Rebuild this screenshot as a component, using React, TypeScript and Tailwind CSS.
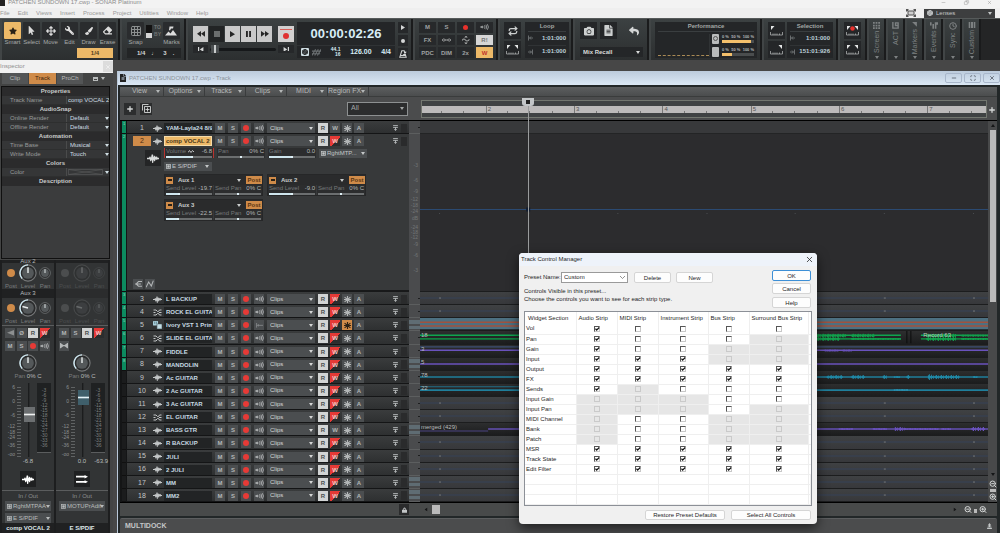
import React from "react";
import clsx from "clsx";
import { Repeat, Grid3x3, ZoomIn, ZoomOut, Aperture, Clock, Minus, Copy, X, Plus, Scan } from "lucide-react";
import {
  FaArrowsAlt,
  FaCamera,
  FaEraser,
  FaFileAlt,
  FaMousePointer,
  FaPaintBrush,
  FaReply,
  FaStar,
  FaWrench,
} from "react-icons/fa";

type Kind = "audio" | "split" | "synth";
type Lane = "empty" | "synth" | "green" | "purpleTop" | "purple" | "teal" | "tealTop" | "merged";

interface Track {
  id: number;
  name: string;
  kind?: Kind;
  write?: boolean;
  frozen?: boolean;
  lane?: Lane;
  label?: string;
}

const TRACKS: Track[] = [
  { id: 3, name: "L BACKUP" },
  { id: 4, name: "ROCK EL GUITAR", kind: "split" },
  { id: 5, name: "Ivory VST 1 Primary", kind: "synth", frozen: true, lane: "synth" },
  { id: 6, name: "SLIDE EL GUITAR", kind: "split", lane: "green", label: "18" },
  { id: 7, name: "FIDDLE", lane: "purpleTop", label: "3" },
  { id: 8, name: "MANDOLIN", lane: "purple", label: "5" },
  { id: 9, name: "Ac GUITAR", lane: "teal", label: "78" },
  { id: 10, name: "2 Ac GUITAR", lane: "tealTop", label: "22" },
  { id: 11, name: "3 Ac GUITAR" },
  { id: 12, name: "EL GUITAR", kind: "split" },
  { id: 13, name: "BASS GTR", write: false, lane: "merged", label: "merged (429)" },
  { id: 14, name: "R BACKUP" },
  { id: 15, name: "JULI" },
  { id: 16, name: "2 JULI" },
  { id: 17, name: "MM" },
  { id: 18, name: "MM2" },
];

const STRIPS = ["Audio Strip", "MIDI Strip", "Instrument Strip", "Bus Strip", "Surround Bus Strip"];

// x = checked, o = unchecked, - = not available for that strip
const WIDGETS: [string, string][] = [
  ["Vol", "xoooo"],
  ["Pan", "xooo-"],
  ["Gain", "xoo--"],
  ["Input", "xxx--"],
  ["Output", "xxxxx"],
  ["FX", "xxxxx"],
  ["Sends", "x-ooo"],
  ["Input Gain", "---oo"],
  ["Input Pan", "---o-"],
  ["MIDI Channel", "-oo--"],
  ["Bank", "-oo--"],
  ["Patch", "-oo--"],
  ["MSR", "xxxxx"],
  ["Track State", "xxxxx"],
  ["Edit Filter", "xxxxx"],
];

const Caret = ({ className = "" }: { className?: string }) => (
  <svg viewBox="0 0 8 6" className={clsx("h-[3px] w-[4px] shrink-0 fill-current", className)}>
    <path d="M0 0h8L4 6z" />
  </svg>
);

const Wave = ({ className = "" }: { className?: string }) => (
  <svg viewBox="0 0 18 12" className={clsx("fill-current", className)}>
    <path d="M0 5h3l1-2h1l1 2 1-5h2l1 4 1-2h1l1 2 1-1h1l1 2h2v2h-2l-1 1h-1l-1-1-1 3h-1l-1-2-1 6H8L7 8l-1 2H5L4 7H0z" />
  </svg>
);

const SplitIcon = () => (
  <svg viewBox="0 0 18 14" className="h-[7px] w-[9px] fill-none stroke-current" strokeWidth="2">
    <path d="M1 2h5l3 3h2l2-3h4M1 7h4M12 7h5M1 12h5l3-3h2l2 3h4" />
  </svg>
);

const SynthIcon = () => (
  <svg viewBox="0 0 16 14" className="h-[8px] w-[9px]">
    <rect width="9" height="8" rx="1" fill="#a9cfdb" />
    <path d="M3 1v4M6 1v4" stroke="#35525c" />
    <rect x="7" y="5" width="9" height="9" rx="1" fill="#c3dde5" stroke="#3a4c52" />
  </svg>
);

const Echo = () => (
  <svg viewBox="0 0 16 10" className="h-[6px] w-[9px] fill-none stroke-current" strokeWidth="1.5">
    <circle cx="4" cy="5" r="1.500" className="fill-current" />
    <path d="M0 5h4M8 2q2 3 0 6M10.500 1q3 4 0 8M13 0q4 5 0 10" />
  </svg>
);

const Snow = () => (
  <svg viewBox="0 0 12 12" className="h-[7px] w-[7px] stroke-current" strokeWidth="2">
    <path d="M6 0v12M1 2l10 8M11 2L1 10M0 6h12" />
  </svg>
);

const Port = () => (
  <svg viewBox="0 0 10 10" className="ml-[2px] h-[5px] w-[5px] shrink-0 fill-none stroke-current" strokeWidth="1.500">
    <rect x="1" y="1" width="8" height="8" />
    <rect x="3.500" y="3.500" width="3" height="3" className="fill-current" />
  </svg>
);

const Ruler = ({ dot = false, left = false, right = false }) => (
  <svg viewBox="0 0 26 20" className="h-[10px] w-[13px] fill-none stroke-[#a9acac]" strokeWidth="1.600">
    <path d="M1 12v6h24v-6M6 15v3M10 15v3M14 15v3M19 15v3" />
    {left && <path d="M2 0h7L2 8z" className="fill-[#e4e6e6]" stroke="none" />}
    {right && <path d="M24 0h-7l7 8z" className="fill-[#e4e6e6]" stroke="none" />}
    {dot && <circle cx="13" cy="5" r="4.500" fill="#e8312c" stroke="none" />}
  </svg>
);

const Drop = ({
  label,
  value,
  className = "",
  caret = "right-[3px]",
  port,
}: {
  label: string;
  value: string;
  className?: string;
  caret?: string;
  port?: boolean;
}) => (
  <span className={clsx("relative flex items-center", className)}>
    {port && <Port />}
    <select
      aria-label={label}
      className={clsx("h-full min-w-0 flex-1 appearance-none bg-transparent outline-none", port ? "pl-px" : "pl-[3px]")}
    >
      <option>{value}</option>
    </select>
    <Caret className={clsx("pointer-events-none absolute", caret)} />
  </span>
);

/* ---------- top toolbar ---------- */

const Module = ({ className, children }: { className: string; children: React.ReactNode }) => (
  <section
    className={clsx(
      "flex shrink-0 border-l-2 border-[#414546] bg-linear-to-b from-[#3c4142] to-[#2c2f30] pt-[3px]",
      className
    )}
  >
    {children}
  </section>
);

const Tool = ({ label, active, children }: { label: string; active?: boolean; children: React.ReactNode }) => (
  <div className="flex w-[17px] flex-col items-center">
    <button
      aria-label={label}
      className={clsx(
        "flex h-[17px] w-[17px] items-center justify-center rounded-[1px]",
        active ? "bg-[#edb968] text-[#2a2116]" : "bg-[#2a2c2e] text-[#dcdcdc]"
      )}
    >
      {children}
    </button>
    <span className="text-[6px] leading-[7px] whitespace-nowrap text-[#a7a9a9]">{label}</span>
  </div>
);

const ToolsModule = () => (
  <Module className="w-[118px] flex-col pl-[2px]">
    <div className="flex gap-[2px]">
      <Tool label="Smart" active>
        <FaStar className="h-[8px] w-[8px]" />
      </Tool>
      <Tool label="Select">
        <FaMousePointer className="h-[9px] w-[7px]" />
      </Tool>
      <Tool label="Move">
        <FaArrowsAlt className="h-[10px] w-[10px]" />
      </Tool>
      <Tool label="Edit">
        <FaWrench className="h-[9px] w-[9px] -scale-x-100" />
      </Tool>
      <Tool label="Draw">
        <FaPaintBrush className="h-[8px] w-[8px]" />
      </Tool>
      <Tool label="Erase">
        <FaEraser className="h-[9px] w-[9px]" />
      </Tool>
    </div>
    <button className="mt-[2px] mr-[5px] h-[10px] w-[36px] self-end bg-[#edb968] text-[6px] font-bold text-[#54401f]">
      1/4
    </button>
  </Module>
);

const SnapModule = () => (
  <Module className="w-[64px] flex-col pl-[5px]">
    <div className="flex justify-between pr-[4px]">
      <Tool label="Snap">
        <Grid3x3 className="h-[12px] w-[12px] text-[#8d9090]" strokeWidth={2} />
      </Tool>
      <div className="flex items-center gap-[2px] pb-[6px]">
        <span className="flex h-[13px] w-[6px] flex-col justify-end bg-[#121212]">
          <span className="h-[5px] bg-[#d4d4d4]" />
        </span>
        <span className="flex flex-col text-[5px] leading-[7px] font-bold text-[#707373]">
          <span>TO</span>
          <span>BY</span>
        </span>
      </div>
      <Tool label="Marks">
        <svg viewBox="0 0 24 20" className="h-[10px] w-[12px] fill-current">
          <path d="M0 19l7-8 4 4 5-7 8 11zM9 1h8l-1 4h-4l-2 4-2-1z" />
        </svg>
      </Tool>
    </div>
    <div className="mt-[2px] flex h-[10px] w-[54px] items-center gap-[6px] bg-[#232526] pl-[10px] text-[6px] font-bold text-[#d5d7d7]">
      <span>1/4</span>
      <span>♩</span>
      <span>3</span>
      <span>.</span>
    </div>
  </Module>
);

const LIGHT_KEY = "flex h-[16px] w-[15px] items-center justify-center bg-[#c9c9c9] text-[#262626]";

const TransportModule = () => (
  <Module className="w-[225px] gap-[3px] pl-[5px]">
    <div className="flex w-[101px] flex-col gap-[3px] pt-[4px]">
      <div className="flex gap-px">
        <button aria-label="Rewind" className={LIGHT_KEY}>
          <svg viewBox="0 0 14 10" className="w-[8px] fill-current">
            <path d="M7 0v10L0 5zM14 0v10L7 5z" />
          </svg>
        </button>
        <button aria-label="Stop" className="flex h-[16px] w-[15px] items-center justify-center bg-[#222425]">
          <span className="h-[6px] w-[6px] bg-[#6a6d6d]" />
        </button>
        <button aria-label="Play" className={LIGHT_KEY}>
          <svg viewBox="0 0 8 10" className="w-[5px] fill-current">
            <path d="M0 0l8 5-8 5z" />
          </svg>
        </button>
        <button aria-label="Pause" className={LIGHT_KEY}>
          <svg viewBox="0 0 8 10" className="w-[5px] fill-current">
            <path d="M0 0h3v10H0zM5 0h3v10H5z" />
          </svg>
        </button>
        <button aria-label="Fast forward" className={LIGHT_KEY}>
          <svg viewBox="0 0 14 10" className="w-[8px] fill-current">
            <path d="M0 0v10l7-5zM7 0v10l7-5z" />
          </svg>
        </button>
        <button
          aria-label="Record"
          className="ml-[5px] flex h-[16px] w-[16px] flex-col items-center justify-center gap-[3px] bg-[#d2d0d0]"
        >
          <span className="h-px w-[12px] bg-[#d9605a]" />
          <span className="h-[6px] w-[6px] rounded-full bg-[#e03131]" />
        </button>
      </div>
      <div className="flex h-[8px] items-center text-[#d4d6d6]">
        <button aria-label="Go to start" className="flex h-full w-[15px] items-center justify-center bg-[#26282a]">
          <svg viewBox="0 0 10 8" className="w-[6px] fill-current">
            <path d="M0 0h2v8H0zM9 0v8L3 4z" />
          </svg>
        </button>
        <input
          type="range"
          aria-label="Song position"
          defaultValue={2}
          className="mx-[2px] h-[3px] min-w-0 flex-1 appearance-none rounded bg-[#16181a] [&::-webkit-slider-thumb]:h-[8px] [&::-webkit-slider-thumb]:w-[8px] [&::-webkit-slider-thumb]:appearance-none [&::-webkit-slider-thumb]:border-x-[3px] [&::-webkit-slider-thumb]:border-[#4a4e50] [&::-webkit-slider-thumb]:bg-[#c9cccc]"
        />
        <button aria-label="Go to end" className="flex h-full w-[16px] items-center justify-center bg-[#26282a]">
          <svg viewBox="0 0 10 8" className="w-[6px] fill-current">
            <path d="M8 0h2v8H8zM1 0v8l6-4z" />
          </svg>
        </button>
      </div>
    </div>
    <div className="flex h-[36px] w-[98px] flex-col bg-[#242628] text-[#d8edf6]">
      <span className="flex-1 pt-[5px] text-center text-[13px] leading-[14px] font-bold">00:00:02:26</span>
      <div className="flex h-[13px] items-center justify-between border-t border-[#303335] px-[4px] text-[7px] font-bold">
        <span className="flex gap-[3px]">
          <span className="flex h-[8px] w-[8px] items-center justify-center rounded-[1px] bg-[#cfdde2] text-[#242628]">
            <Aperture className="h-[6px] w-[6px]" strokeWidth={4} />
          </span>
          <svg viewBox="0 0 10 8" className="h-[8px] w-[9px] stroke-[#6a6f71]" strokeWidth="1.200">
            <path d="M0 8l4-7M3 8l4-7M6 8l4-7M0 3h10M0 6h9" />
          </svg>
        </span>
        <span className="flex flex-col items-end text-[5px] leading-[5px]">
          <span>44.1</span>
          <span>16</span>
        </span>
        <span>126.00</span>
        <span>4/4</span>
      </div>
    </div>
    <div className="flex flex-col gap-[2px] text-[#d4d6d6]">
      <button aria-label="Preview" className="flex h-[11px] w-[10px] items-center justify-center bg-[#26282a]">
        <svg viewBox="0 0 8 10" className="w-[4px] fill-current">
          <path d="M0 0l8 5-8 5z" />
        </svg>
      </button>
      <button aria-label="Arm" className="flex h-[11px] w-[10px] items-center justify-center bg-[#26282a]">
        <span className="h-[4px] w-[4px] rounded-full bg-[#d4d6d6]" />
      </button>
      <button aria-label="Metronome" className="flex h-[11px] w-[10px] items-center justify-center bg-[#26282a]">
        <svg viewBox="0 0 10 10" className="w-[8px] fill-none stroke-current" strokeWidth="1.300">
          <path d="M3.500 1h3L9 9H1zM5 7l4-5M2 7h6" />
        </svg>
      </button>
    </div>
  </Module>
);

const MIX_KEYS = ["M", "S", "rec", "echo", "FX", "dim", "auto", "R!", "PDC", "DIM", "2x", "W"];

const MixModule = () => (
  <Module className="w-[83px] pl-[4px]">
    <div className="grid h-[36px] grid-cols-4 grid-rows-3 gap-[2px]">
      {MIX_KEYS.map((key) => (
        <button
          key={key}
          aria-label={key}
          className={clsx(
            "flex w-[17px] items-center justify-center text-[6px] leading-none font-bold",
            key === "R!" && "bg-[#d6d6d6] text-[#737575]",
            key === "W" && "bg-[#edb968] text-[#c0302a]",
            key !== "R!" && key !== "W" && "bg-[#27292b] text-[#9fa2a2]"
          )}
        >
          {key === "rec" && <span className="h-[5px] w-[5px] rounded-full bg-[#e8312c]" />}
          {key === "echo" && <Echo />}
          {key === "dim" && (
            <svg viewBox="0 0 18 8" className="w-[9px] fill-none stroke-current" strokeWidth="1.800">
              <path d="M0 4q4-5 7 0-3 5-7 0M11 4q3-5 7 0-4 5-7 0M6 4h6" />
            </svg>
          )}
          {key === "auto" && (
            <svg viewBox="0 0 14 14" className="w-[8px] fill-none stroke-current" strokeWidth="1.800">
              <path d="M0 8q3-5 6-1t7-1M5 3l2-3 2 3M5 11l2 3 2-3" />
            </svg>
          )}
          {!["rec", "echo", "auto", "dim"].includes(key) && key}
        </button>
      ))}
    </div>
  </Module>
);

const IconKey = ({ label, children }: { label: string; children: React.ReactNode }) => (
  <button aria-label={label} className="flex h-[17px] w-[17px] items-center justify-center bg-[#242628] text-[#cdd0d0]">
    {children}
  </button>
);

const RangePanel = ({ title, from, to, className }: { title: string; from: string; to: string; className: string }) => (
  <div className={clsx("flex h-[36px] flex-col bg-[#242628] px-[3px] text-[6px]", className)}>
    <span className="border-b border-[#3a3e40] text-center leading-[9px] font-bold text-[#a3a6a6]">{title}</span>
    {[from, to].map((time, i) => (
      <span
        key={i}
        className="flex flex-1 items-center justify-between border-b border-[#303335] font-bold text-[#bdd0d8] last:border-0"
      >
        <svg
          viewBox="0 0 10 10"
          className={clsx("h-[6px] w-[5px] fill-none stroke-[#7c8082]", i === 1 && "-scale-x-100")}
          strokeWidth="1.600"
        >
          <path d="M1 0v10M3 5h7M6 2l-3 3 3 3" />
        </svg>
        {time}
      </span>
    ))}
  </div>
);

const Load = ({ label, value }: { label: string; value: number }) => (
  <div className="flex items-center gap-[3px]">
    <span className="flex h-[10px] w-[7px] items-center justify-center rounded-[1px] bg-[#b9bbbb]">
      {label === "Disk" && <span className="h-[5px] w-[5px] rounded-full border border-[#555]" />}
    </span>
    <div className="flex flex-1 flex-col gap-px">
      <span className="flex justify-between text-[4px] leading-[5px] font-bold text-[#b5b8b8]">
        <span>0 %</span>
        <span>50 %</span>
        <span>100 %</span>
      </span>
      <span className="h-[3px] bg-[#4a4d4e]" role="meter" aria-label={label} aria-valuenow={value}>
        <span className="block h-full bg-[#f3c06c]" style={{ width: `${value}%` }} />
      </span>
    </div>
  </div>
);

const PerformanceModule = () => (
  <Module className="w-[111px] pl-[4px]">
    <div className="flex h-[36px] w-[102px] flex-col bg-[#242628] px-[3px]">
      <span className="border-b border-[#3a3e40] text-center text-[6px] leading-[9px] font-bold text-[#a3a6a6]">
        Performance
      </span>
      <div className="flex flex-1 items-center">
        <div className="mb-[2px] w-[51px] self-end border-b border-dashed border-[#a98a55]" />
        <div className="flex flex-1 flex-col gap-[3px] border-l border-[#303335] pl-[2px]">
          <Load label="Disk" value={91} />
          <Load label="CPU" value={30} />
        </div>
      </div>
    </div>
  </Module>
);

const SIDE_TABS: [string, React.ReactNode][] = [
  [
    "Screen",
    <svg viewBox="0 0 8 8" className="h-[7px] w-[7px] fill-current">
      <path d="M0 0h2v2H0zM3 0h2v2H3zM6 0h2v2H6zM0 3h2v2H0zM3 3h2v2H3zM6 3h2v2H6zM0 6h2v2H0zM3 6h2v2H3zM6 6h2v2H6z" />
    </svg>,
  ],
  [
    "ACT",
    <svg viewBox="0 0 8 8" className="h-[7px] w-[7px] fill-none stroke-current" strokeWidth="1.600">
      <path d="M1 0v7h6V1H4v3h3" />
    </svg>,
  ],
  [
    "Markers",
    <svg viewBox="0 0 8 8" className="h-[7px] w-[7px] fill-current">
      <path d="M0 0h8v8z" />
    </svg>,
  ],
  [
    "Events",
    <svg viewBox="0 0 10 8" className="h-[7px] w-[8px] fill-current">
      <path d="M0 0h2v4H0zM3 2h2v6H3zM6 0h4v3H8v5H6z" />
    </svg>,
  ],
  ["Sync", <Clock className="h-[8px] w-[8px]" strokeWidth={3} />],
  [
    "Custom",
    <svg viewBox="0 0 9 8" className="h-[7px] w-[8px] fill-current">
      <path d="M0 0h2v8H0zM3 0h3v8H3zM7 0h2v8H7z" />
    </svg>,
  ],
];

const Toolbar = () => (
  <header className="flex h-[42px] shrink-0 gap-[2px] border-t border-[#565a5a] bg-[#1a1b1c]">
    <ToolsModule />
    <SnapModule />
    <TransportModule />
    <MixModule />
    <Module className="w-[73px] gap-[4px] pl-[4px]">
      <div className="flex flex-col gap-[2px]">
        <IconKey label="Loop on">
          <Repeat className="h-[10px] w-[10px]" strokeWidth={3} />
        </IconKey>
        <IconKey label="Loop to selection">
          <Ruler left right />
        </IconKey>
      </div>
      <RangePanel title="Loop" from="1:01:000" to="1:01:000" className="w-[44px]" />
    </Module>
    <Module className="w-[74px] flex-col gap-[8px] pl-[5px]">
      <div className="flex gap-[3px]">
        <IconKey label="Take snapshot">
          <FaCamera className="h-[10px] w-[10px]" />
        </IconKey>
        <IconKey label="Notes">
          <FaFileAlt className="h-[11px] w-[9px]" />
        </IconKey>
        <button aria-label="Undo" className="ml-[5px] flex h-[17px] w-[17px] items-center justify-center text-[#d4d6d6]">
          <FaReply className="h-[10px] w-[10px]" />
        </button>
      </div>
      <Drop
        label="Mix recall"
        value="Mix Recall"
        className="h-[10px] w-[63px] bg-[#242628] text-[6px] font-bold text-[#d8dada]"
      />
    </Module>
    <PerformanceModule />
    <Module className="w-[74px] gap-[2px] pl-[4px]">
      <div className="flex flex-col gap-[2px]">
        <IconKey label="Set start">
          <Ruler left />
        </IconKey>
        <IconKey label="Set end">
          <Ruler right />
        </IconKey>
      </div>
      <RangePanel title="Selection" from="1:01:000" to="151:01:926" className="w-[46px]" />
    </Module>
    <Module className="w-[27px] flex-col gap-[2px] pl-[4px]">
      <IconKey label="Punch">
        <Ruler dot left right />
      </IconKey>
      <IconKey label="Punch range">
        <Ruler left right />
      </IconKey>
    </Module>
    {SIDE_TABS.map(([label, icon]) => (
      <Module key={label} className="w-[17px]">
        <button className="flex h-[37px] w-full flex-col items-center gap-[2px] text-[#7d8182]">
          {icon}
          <span className="flex-1 rotate-180 text-right text-[7px] leading-[9px] [writing-mode:vertical-rl]">{label}</span>
          <Caret />
        </button>
      </Module>
    ))}
    <span className="flex-1 bg-[#242526]" />
  </header>
);

/* ---------- inspector ---------- */

const PropHead = ({ children }: { children: React.ReactNode }) => (
  <h3 className="h-[9px] bg-[#2b2b2c] text-center text-[6px] leading-[9px] font-bold text-[#c9cbcb]">{children}</h3>
);

const PropRow = ({ label, value, text }: { label: string; value?: string; text?: boolean }) => (
  <div className="flex h-[9px] border-b border-[#2e2f2f] bg-[#353637] text-[6px] leading-[8px] text-[#989a9a]">
    <span className="w-[65px] border-r border-[#4a4b4b] pl-[8px]">{label}</span>
    {text && (
      <input
        aria-label={label}
        defaultValue={value}
        className="w-[42px] min-w-0 bg-transparent pl-px text-[#cfdde2] outline-none"
      />
    )}
    {!text && value && <Drop label={label} value={value} className="w-[42px] text-[#cfdde2]" caret="right-0" />}
    {!value && (
      <button aria-label="Pick color" className="flex w-[42px] items-center justify-between pl-px text-[#cfdde2]">
        <svg viewBox="0 0 35 6" className="h-[6px] w-[35px] fill-none stroke-[#5a5c5d]" strokeWidth="0.600">
          <path d="M0.500 0.500h34v5h-34zl34 5M34.500 0.500l-34 5" />
        </svg>
        <Caret />
      </button>
    )}
  </div>
);

const Knob = ({ size, angle = 0, dim }: { size: "sm" | "lg"; angle?: number; dim?: boolean }) => (
  <svg
    viewBox="0 0 20 20"
    className={clsx(size === "lg" ? "h-[18px] w-[18px]" : "h-[12px] w-[12px]", dim && "opacity-30")}
  >
    <circle cx="10" cy="10" r="9" fill="#2a2b2c" stroke="#77797a" strokeWidth="1.200" />
    {!dim && size === "lg" && <path d="M3.500 16A9 9 0 0 1 10 1" fill="none" stroke="#cfe8f1" strokeWidth="1.600" />}
    <circle cx="10" cy="10" r="6.500" fill="#54585a" />
    <path d="M10 3.500V10" stroke="#e6eaeb" strokeWidth="1.600" transform={`rotate(${angle} 10 10)`} />
  </svg>
);

const SendKnobs = ({ dim, angle }: { dim?: boolean; angle?: number }) => (
  <div
    className={clsx(
      "flex h-[26px] justify-between px-[3px] pt-[1px] text-[6px] leading-[6px]",
      dim ? "text-[#4c4e4f]" : "text-[#7a7c7d]"
    )}
  >
    <span className="flex flex-col items-center justify-between">
      <span className={clsx("mt-[5px] h-[8px] w-[8px] rounded-full", dim ? "bg-[#4b4d4e]" : "bg-[#cf8b49]")} />
      Post
    </span>
    <span className="flex flex-col items-center justify-between">
      <Knob size="lg" dim={dim} angle={angle} />
      Level
    </span>
    <span className="flex flex-col items-center justify-between">
      <span className="mt-[3px]">
        <Knob size="sm" dim={dim} />
      </span>
      Pan
    </span>
  </div>
);

const Key = ({
  label,
  tone = "plain",
  children,
}: {
  label: string;
  tone?: "plain" | "light" | "write" | "orange";
  children: React.ReactNode;
}) => (
  <button
    aria-label={label}
    className={clsx(
      "flex h-[10px] w-[10px] shrink-0 items-center justify-center text-[6px] leading-none font-bold",
      tone === "plain" && "bg-[#4b4e50] text-[#b3b6b7]",
      tone === "light" && "bg-[#d2d4d4] text-[#4c4f50]",
      tone === "orange" && "bg-[#cf8b49] text-[#2a2116]",
      tone === "write" && "bg-linear-135 from-[#e63a36] from-55% to-[#2b2d2e] to-55% text-[#f2c6c3]"
    )}
  >
    {children}
  </button>
);

const RecDot = () => <span className="h-[6px] w-[6px] rounded-full bg-[#e63a36]" />;

const FADER_MARKS: [string, number][] = [
  ["6", 4],
  ["0", 18],
  ["-6", 32],
  ["-12", 43],
  ["-18", 49],
  ["-24", 54],
  ["-36", 62],
  ["-oo", 71],
];

const METER_MARKS = ["-3", "-6", "-9", "-12", "-15", "-18", "-21", "-24", "-27", "-30", "-33", "-36"];

const Fader = ({ label, value, teal }: { label: string; value: number; teal?: boolean }) => (
  <div className="flex h-[74px] px-[3px]">
    <svg viewBox="0 0 18 74" className="h-[74px] w-[18px]">
      {FADER_MARKS.map(([text, y]) => (
        <text key={text} x="10" y={y + 2} textAnchor="end" fontSize="5" fill="#8d9091">
          {text}
        </text>
      ))}
      {Array.from({ length: 24 }, (_, i) => (
        <path key={i} d={`M12 ${4.5 + i * 3}h4`} stroke="#606364" strokeWidth="1" />
      ))}
    </svg>
    <input
      type="range"
      aria-label={label}
      defaultValue={value}
      className={clsx(
        "h-full w-[12px] appearance-none bg-linear-to-r from-transparent from-40% via-[#121314] via-40% to-transparent to-60% [direction:rtl] [writing-mode:vertical-lr]",
        "[&::-webkit-slider-thumb]:h-[15px] [&::-webkit-slider-thumb]:w-[11px] [&::-webkit-slider-thumb]:appearance-none [&::-webkit-slider-thumb]:bg-linear-to-b [&::-webkit-slider-thumb]:from-40% [&::-webkit-slider-thumb]:to-60%",
        teal
          ? "[&::-webkit-slider-thumb]:from-[#3f5f6b] [&::-webkit-slider-thumb]:via-[#e4f3f8] [&::-webkit-slider-thumb]:to-[#3f5f6b]"
          : "[&::-webkit-slider-thumb]:from-[#6b6e70] [&::-webkit-slider-thumb]:via-[#f0f2f2] [&::-webkit-slider-thumb]:to-[#6c6f71]"
      )}
    />
    <div className="ml-auto flex h-[70px] w-[14px] flex-col items-center border-b border-[#5b5d5e] bg-[#1f2122] pt-[5px] text-[5px] leading-[5px] text-[#7b7e7f]">
      {METER_MARKS.map((mark) => (
        <span key={mark}>{mark}</span>
      ))}
    </div>
  </div>
);

const Strip = ({
  name,
  keys,
  volume,
  peak,
  outs,
  main,
}: {
  name: string;
  keys: React.ReactNode;
  volume: string;
  peak?: string;
  outs: string[];
  main?: boolean;
}) => (
  <section className="flex w-[52px] flex-col bg-[#323435] text-[#b9bcbc]">
    <span className="h-[3px] bg-[#202122] text-center text-[6px] leading-[3px]">{main && "Aux 2"}</span>
    <SendKnobs dim={!main} />
    <span className={clsx("h-[9px] text-center text-[6px] leading-[9px]", main ? "bg-[#202122]" : "bg-[#2b2c2d]")}>
      {main && "Aux 3"}
    </span>
    <SendKnobs dim={!main} angle={-75} />
    <div className="mt-[1px] grid h-[26px] grid-cols-4 content-between justify-between border-t border-[#5b5d5e] px-[3px] pt-[2px]">
      {keys}
    </div>
    <div className="mt-[3px] flex flex-col items-center text-[6px] leading-[7px]">
      <Knob size="lg" />
      <span className="pt-[1px]">
        <span className="text-[#7a7c7d]">Pan</span> <span>0% C</span>
      </span>
    </div>
    <div className="pt-[3px]">
      <Fader label={`${name} volume`} value={main ? 60 : 89} teal={!main} />
    </div>
    <div className="grid h-[9px] grid-cols-3 text-[6px] leading-[9px]">
      <span />
      <span className="text-center">{volume}</span>
      <span className="text-right">{peak}</span>
    </div>
    <span className="mt-[5px] flex h-[16px] w-[16px] items-center justify-center self-center bg-[#1f2021] text-white">
      {main ? (
        <Wave className="h-[9px] w-[12px]" />
      ) : (
        <svg viewBox="0 0 14 10" className="w-[12px] fill-current">
          <path d="M0 1h10V0l4 2-4 2V3H0zM0 7h10V6l4 2-4 2V9H0z" />
        </svg>
      )}
    </span>
    <h4 className="mt-[3px] border-t border-[#5b5d5e] text-center text-[6px] leading-[10px] text-[#8d9091]">In / Out</h4>
    <div className="flex flex-col gap-[2px] px-[3px]">
      {outs.map((out) => (
        <Drop key={out} label={out} value={out} port className="h-[10px] bg-[#4b4e50] text-[6px]" caret="right-[1px]" />
      ))}
    </div>
    <span className="mt-auto bg-[#202122] text-center text-[6px] leading-[10px] font-bold text-[#dfe7ea]">{name}</span>
  </section>
);

const Inspector = () => (
  <aside className="flex w-[113px] shrink-0 flex-col bg-[#434444]">
    <div className="flex h-[13px] items-center justify-between bg-[#f1f1f1] text-[6px] text-[#8f8f8f]">
      Inspector
      <button aria-label="Close inspector" className="flex h-[11px] w-[10px] items-center justify-center bg-[#dcdcdc] text-white">
        <X className="h-[6px] w-[6px]" />
      </button>
    </div>
    <div className="flex h-[11px] gap-px pl-[2px] text-[6px] text-[#b9bcbc]">
      <button className="w-[26px] bg-[#535556]">Clip</button>
      <button className="w-[27px] bg-[#cf8b49] text-[#3c2510]">Track</button>
      <button className="w-[26px] bg-[#535556]">ProCh</button>
      <button aria-label="Display" className="flex flex-1 items-center justify-center gap-[3px]">
        <span className="h-[4px] w-[5px] border border-t-2 border-[#b9bcbc]" />
        <Caret />
      </button>
    </div>
    <div className="mt-[2px] mr-[3px] ml-[1px] flex h-[173px] flex-col border border-[#101010] bg-[#3b3c3d]">
      <PropHead>Properties</PropHead>
      <PropRow label="Track Name" value="comp VOCAL 2" text />
      <PropHead>AudioSnap</PropHead>
      <PropRow label="Online Render" value="Default" />
      <PropRow label="Offline Render" value="Default" />
      <PropHead>Automation</PropHead>
      <PropRow label="Time Base" value="Musical" />
      <PropRow label="Write Mode" value="Touch" />
      <PropHead>Colors</PropHead>
      <PropRow label="Color" />
      <PropHead>Description</PropHead>
    </div>
    <div className="mt-[1px] mr-[3px] flex flex-1 justify-between bg-[#1d1e1f] px-[2px]">
      <Strip
        main
        name="comp VOCAL 2"
        volume="-6.8"
        outs={["RghtMTPAA", "E S/PDIF"]}
        keys={
          <>
            <Key label="Mono">
              <svg viewBox="0 0 10 8" className="w-[7px] fill-[#8d9091]">
                <path d="M10 0v8L0 4z" />
              </svg>
            </Key>
            <Key label="Phase">Ø</Key>
            <Key label="Read" tone="light">R</Key>
            <Key label="Write" tone="write">W</Key>
            <Key label="Mute">M</Key>
            <Key label="Solo">S</Key>
            <Key label="Arm">
              <RecDot />
            </Key>
            <Key label="Echo">
              <Echo />
            </Key>
          </>
        }
      />
      <Strip
        name="E S/PDIF"
        volume="0.0"
        peak="-63.9"
        outs={["MOTUPrAdif"]}
        keys={
          <>
            <Key label="Mute">M</Key>
            <Key label="Solo">S</Key>
            <Key label="Read" tone="light">R</Key>
            <Key label="Write" tone="write">W</Key>
            <Key label="Interleave">
              <svg viewBox="0 0 12 8" className="w-[8px] fill-current">
                <path d="M0 0h1l4 3h2l4-3h1v8h-1L7 5H5L1 8H0z" />
              </svg>
            </Key>
          </>
        }
      />
    </div>
  </aside>
);

/* ---------- track list ---------- */

const Level = ({
  label,
  text,
  value,
  pan,
  curve,
}: {
  label: string;
  text: string;
  value: number;
  pan?: boolean;
  curve?: boolean;
}) => (
  <label className="flex h-[10px] w-[48px] flex-col justify-between bg-[#2c2d2e] px-[1px] text-[6px] leading-[7px]">
    <span className="flex justify-between whitespace-nowrap">
      <span className="flex items-center gap-[2px] text-[#76797a]">
        {label}
        {curve && (
          <svg viewBox="0 0 12 6" className="h-[3px] w-[6px] fill-none stroke-[#cfd2d2]" strokeWidth="1.800">
            <path d="M0 5l3-4 3 4 3-4 3 3" />
          </svg>
        )}
      </span>
      <span className="text-[#b4b7b8]">{text}</span>
    </span>
    <input
      type="range"
      defaultValue={value}
      className="h-[2px] w-full appearance-none bg-[#6c6f70] [&::-webkit-slider-thumb]:h-[2px] [&::-webkit-slider-thumb]:w-[2px] [&::-webkit-slider-thumb]:appearance-none [&::-webkit-slider-thumb]:bg-[#dff0f6]"
      style={{ backgroundImage: `linear-gradient(90deg, #cfe6ee ${pan ? 0 : value}%, transparent 0)` }}
    />
  </label>
);

const Send = ({ name, level, value }: { name: string; level: string; value: number }) => (
  <div className="w-[99px] border border-[#262728]">
    <div className="flex h-[10px] items-center gap-[2px] bg-[#2a2b2c] text-[6px] font-bold text-[#c9cccc]">
      <button aria-label={`${name} enable`} className="ml-[1px] flex h-[7px] w-[7px] items-center justify-center bg-[#cf8b49]">
        <span className="h-[2px] w-[4px] bg-[#2a2116]" />
      </button>
      <Drop label={name} value={name} className="h-full flex-1" />
      <button className="h-[8px] w-[16px] bg-[#cf8b49] text-[6px] leading-[8px] text-[#5a3512]">Post</button>
    </div>
    <div className="flex justify-between">
      <Level label="Send Level" text={level} value={value} />
      <Level label="Send Pan" text="0% C" value={50} pan />
    </div>
  </div>
);

const TrackHead = ({ track, active }: { track: Track; active?: boolean }) => (
  <div className="flex h-[13px] shrink-0 items-center pt-[1px] text-[#c4c7c8]">
    <span
      className={clsx(
        "flex h-[10px] w-[18px] items-center justify-center text-[7px]",
        active && "bg-[#cf8b49] text-[#4a2c10]"
      )}
    >
      {track.id}
    </span>
    <span className="flex w-[13px] justify-center">
      {track.kind === "split" && <SplitIcon />}
      {track.kind === "synth" && <SynthIcon />}
      {!track.kind && <Wave className="h-[7px] w-[9px]" />}
    </span>
    <input
      aria-label={`Track ${track.id} name`}
      defaultValue={track.name}
      className={clsx(
        "h-[10px] w-[48px] text-[6px] font-bold outline-none",
        active ? "border border-[#f6dca9] bg-[#edb968] pl-px text-[#4a3718]" : "bg-[#222425] pl-[2px] text-[#c8dbe3]"
      )}
    />
    <div className="ml-[3px] flex gap-[3px]">
      <Key label="Mute">M</Key>
      <Key label="Solo">S</Key>
      <Key label="Arm">
        <RecDot />
      </Key>
      <Key label="Echo">
        {track.kind === "synth" ? (
          <svg viewBox="0 0 12 8" className="w-[7px] fill-none stroke-[#85888a]" strokeWidth="1.500">
            <path d="M1 0v8M1 4h11M4 2v4" />
          </svg>
        ) : (
          <Echo />
        )}
      </Key>
    </div>
    <Drop
      label="Filter"
      value="Clips"
      className="ml-[3px] h-[10px] w-[48px] bg-[#4b4e50] text-[6px] text-[#d5d7d7]"
      caret="right-[2px]"
    />
    <div className="ml-[3px] flex gap-[2px]">
      <Key label="Read" tone="light">R</Key>
      <Key label="Write" tone={track.write === false ? "plain" : "write"}>W</Key>
      <Key label="Freeze" tone={track.frozen ? "orange" : "plain"}>
        <Snow />
      </Key>
      <Key label="Archive">A</Key>
    </div>
    <svg viewBox="0 0 8 10" className="ml-auto h-[6px] w-[5px] fill-none stroke-current" strokeWidth="1.400">
      <path d="M0 1h8M0 4h8M4 4v5M2 7l2 2 2-2" />
    </svg>
    <span className="mr-[2px] ml-[3px] h-[9px] w-[6px] bg-[#2a2b2c]" />
  </div>
);

const ColorTab = ({ id }: { id: number }) => (
  <span
    className={clsx(
      "mr-[1px] w-[4px] shrink-0 border-b border-[#101010] text-center text-[4px] leading-[5px]",
      id <= 8 ? "bg-[#0c8a5f] text-[#9fd8c3]" : "bg-[#1b1c1d]"
    )}
  >
    {id <= 8 && id}
  </span>
);

const Gutter = ({ meter }: { meter?: boolean }) => (
  <span className="flex w-[11px] shrink-0 flex-col justify-center gap-[2px] border-b border-[#5c5e5f] bg-[#4a4b4d]">
    {meter && <span className="h-[4px] bg-[#5f6c73]" />}
    {meter && <span className="h-[3px] bg-[#5f6c73]" />}
    {!meter && <span className="h-px w-[2px] self-end bg-[#1d1e1f]" />}
  </span>
);

const DOTS = [19, 108, 197, 286, 374, 463, 552];

/* runs of audio drawn as thin bars around y: [x, width, height] */
const Peaks = ({ color, y, peaks }: { color: string; y: number; peaks: [number, number, number][] }) => (
  <path
    stroke={color}
    d={peaks
      .map(([x, w, h]) =>
        Array.from({ length: w }, (_, i) => {
          const half = 0.6 + ((i * 7 + x) % 5) * 0.25 * (h - 0.5);
          return `M${x + i + 0.5} ${y - half}v${half * 2}`;
        }).join("")
      )
      .join("")}
  />
);

const ClipLane = ({ track }: { track: Track }) => {
  const lane = track.lane ?? "empty";
  return (
    <div
      className={clsx(
        "relative min-w-0 flex-1 overflow-hidden border-b border-[#1c1d1e]",
        lane === "empty" ? "bg-linear-to-b from-[#3f4143] to-[#37383b]" : "bg-linear-to-b from-[#2d2e2f] to-[#1c1d1e]"
      )}
    >
      <svg viewBox="0 0 567 13" preserveAspectRatio="none" className="block h-full w-full">
        {lane === "empty" && (
          <g>
            <path d="M0 6.500h567" stroke="#364259" />
            {DOTS.map((x) => (
              <path key={x} d={`M${x} 6.500h2`} stroke="#64676a" strokeWidth="1.500" />
            ))}
          </g>
        )}
        {lane === "synth" && (
          <g>
            <path d="M0 0h567v12H0z" fill="#4d7081" />
            <path d="M0 4.500h567M0 8.500h567" stroke="#a0523f" strokeWidth="1.600" />
          </g>
        )}
        {lane === "green" && (
          <g>
            <path d="M0 4.500h480M500 4.500h67" stroke="#0fa54f" strokeWidth="1.600" />
            <path d="M0 8.500h480M500 8.500h67" stroke="#12803f" strokeWidth="2" />
            <Peaks color="#12a04c" y={5} peaks={[[395, 30, 2], [430, 24, 2], [505, 30, 2], [540, 27, 1]]} />
            <Peaks color="#12a04c" y={8.5} peaks={[[395, 24, 2], [430, 50, 1], [505, 30, 2], [540, 27, 1]]} />
            <path d="M486 0v13M490 0v13" stroke="#0c0d0d" />
          </g>
        )}
        {lane === "purpleTop" && (
          <g>
            <path d="M0 2h567" stroke="#37455f" strokeWidth="2" />
            <path d="M0 5.500h567" stroke="#6a52bd" strokeWidth="1.600" />
            <Peaks color="#6a52bd" y={6} peaks={[[404, 14, 1], [422, 9, 1]]} />
          </g>
        )}
        {lane === "purple" && <path d="M0 6.500h567" stroke="#6a52bd" strokeWidth="1.600" />}
        {lane === "teal" && (
          <g>
            <path d="M0 6.500h567" stroke="#1f7f9c" strokeWidth="1.600" />
            <Peaks
              color="#2088a6"
              y={6.5}
              peaks={[[406, 16, 2], [430, 14, 2], [462, 4, 2], [473, 6, 1], [485, 4, 2], [507, 4, 3], [511, 28, 2], [552, 5, 1]]}
            />
          </g>
        )}
        {lane === "tealTop" && (
          <g>
            <path d="M0 6.500h567" stroke="#1f7f9c" strokeWidth="2" />
            <path d="M0 3h110" stroke="#226f88" />
            <Peaks color="#2a8fae" y={6.5} peaks={[[473, 14, 1]]} />
          </g>
        )}
        {lane === "merged" && (
          <g>
            <path d="M68 6.500h499" stroke="#6450b4" strokeWidth="1.600" />
            <path d="M0 8.500h68" stroke="#4b4280" />
            <Peaks
              color="#6a52bd"
              y={6.5}
              peaks={[[418, 14, 1], [452, 14, 1], [474, 10, 2], [484, 34, 1], [520, 10, 1], [550, 14, 2]]}
            />
          </g>
        )}
      </svg>
      {track.label && (
        <span className="absolute top-0 left-[1px] text-[6px] leading-[8px] text-[#b9bcbc]">{track.label}</span>
      )}
      {lane === "green" && (
        <span className="absolute top-0 right-[37px] text-[6px] leading-[9px] text-[#b9c9be]">Record 63</span>
      )}
    </div>
  );
};

const GAIN_MARKS: [string, number][] = [
  ["-3", 33],
  ["-6", 48],
  ["-9", 59],
  ["-12", 67],
  ["-18", 73],
  ["-24", 79],
  ["dB", 86],
  ["-24", 95],
  ["-18", 100],
  ["-12", 105],
  ["-9", 112],
  ["-6", 123],
  ["-3", 138],
];

const ActiveTrack = () => (
  <div className="flex h-[158px] shrink-0">
    <ColorTab id={2} />
    <div className="flex w-[282px] shrink-0 flex-col border-b-2 border-[#18191a] bg-[#37393a] pl-[6px]">
      <TrackHead track={{ id: 2, name: "comp VOCAL 2" }} active />
      <div className="flex flex-1 pl-[12px]">
        <span className="mt-[3px] flex h-[16px] w-[16px] items-center justify-center bg-[#242526] text-[#d8dada]">
          <Wave className="h-[9px] w-[12px]" />
        </span>
        <div className="ml-[3px] flex flex-col pt-px text-[#c4c7c8]">
          <div className="flex items-start gap-[3px]">
            <span className="border-x border-[#b8332f]">
              <Level label="Volume" text="-6.8" value={56} curve />
            </span>
            <Level label="Pan" text="0% C" value={50} pan />
            <Level label="Gain" text="0.0" value={50} />
            <Drop
              label="Input"
              value="RghtMTP..."
              port
              className="mt-[1px] h-[9px] w-[48px] bg-[#4b4e50] text-[6px]"
              caret="right-[2px]"
            />
          </div>
          <Drop label="Output" value="E S/PDIF" port className="mt-[4px] h-[9px] w-[48px] bg-[#4b4e50] text-[6px]" />
          <div className="mt-[3px] grid grid-cols-2 gap-x-[3px] gap-y-[3px]">
            <Send name="Aux 1" level="-19.7" value={27} />
            <Send name="Aux 2" level="-9.0" value={50} />
            <Send name="Aux 3" level="-22.5" value={25} />
          </div>
        </div>
      </div>
      <div className="mb-[1px] flex gap-[2px]">
        <Key label="Take lanes">
          <svg viewBox="0 0 12 10" className="w-[7px] fill-none stroke-current" strokeWidth="1.800">
            <path d="M12 1H6L2 5l4 4h6M0 5h10" />
          </svg>
        </Key>
        <Key label="Automation lanes">
          <svg viewBox="0 0 12 12" className="w-[8px] fill-none stroke-current" strokeWidth="1.600">
            <path d="M0 11l4-8 4 6 3-8" />
          </svg>
        </Key>
      </div>
    </div>
    <svg viewBox="0 0 11 158" className="h-[158px] w-[11px] shrink-0 bg-[#4a4b4d]">
      {GAIN_MARKS.map(([text, y]) => (
        <text key={y} x="9" y={y} textAnchor="end" fontSize="5" fill="#737677">
          {text}
        </text>
      ))}
    </svg>
    <div className="min-w-0 flex-1 border-b border-[#1c1d1e] bg-[#2c2c2e]">
      <svg viewBox="0 0 567 157" preserveAspectRatio="none" className="block h-full w-full">
        <path d="M0 75.500h567" stroke="#2b4a72" strokeWidth="1.200" />
        <path d="M106 75.500h4" stroke="#101c30" strokeWidth="4" />
        {DOTS.map((x) => (
          <path key={x} d={`M${x} 79.500h1`} stroke="#4a4d50" />
        ))}
      </svg>
    </div>
  </div>
);

const TrackRow = ({ track, className }: { track: Track; className: string }) => (
  <div className={clsx("flex min-h-0", className)}>
    <ColorTab id={track.id} />
    <div className="w-[282px] shrink-0 overflow-hidden border-b border-[#141516] bg-linear-to-b from-[#3a3c3d] to-[#2e3031] pl-[6px]">
      <TrackHead track={track} />
    </div>
    <Gutter meter={[5, 8, 13, 17, 18].includes(track.id)} />
    {track.id === 1 ? (
      <div className="flex-1 border-b border-[#232425] bg-[#38393b]" />
    ) : (
      <ClipLane track={track} />
    )}
  </div>
);

const TimeRuler = () => (
  <div className="relative min-w-0 flex-1 border border-[#72766f] bg-[#3f4243] py-[4px]">
    <div className="mt-px h-[7px] bg-[#bcbaba] text-[6px] leading-[7px] text-[#555]">
      {[2, 3, 4, 5, 6, 7].map((bar, i) => (
        <span
          key={bar}
          className="absolute border-l border-[#777] pl-px"
          style={{ left: `${11.3 + i * 15.66}%` }}
        >
          {bar}
        </span>
      ))}
      {Array.from({ length: 25 }, (_, i) => i)
        .filter((i) => i % 4 !== 2)
        .map((i) => (
          <span
            key={i}
            className="absolute mt-[5px] h-[2px] w-px bg-[#777]"
            style={{ left: `${3.4 + i * 3.915}%` }}
          />
        ))}
    </div>
  </div>
);

const VIEW_MENUS = ["View", "Options", "Tracks", "Clips", "MIDI", "Region FX"];

const TrackWindow = () => (
  <main className="mt-[11px] ml-[4px] flex min-w-0 flex-1 flex-col border-l border-[#b9c8d8] bg-[#222728]">
    <div className="flex h-[14px] shrink-0 items-center gap-[3px] bg-linear-to-b from-[#bccbdc] to-[#dbe8f5] pl-[2px] text-[6px] text-[#8b9299]">
      <FaFileAlt className="h-[8px] w-[6px] text-[#222]" />
      <span className="flex-1">PATCHEN SUNDOWN 17.cwp - Track</span>
      {[Minus, Scan, X].map((Icon, i) => (
        <button
          key={i}
          aria-label={["Minimize track view", "Restore track view", "Close track view"][i]}
          className="-ml-px flex h-[10px] w-[17px] items-center justify-center rounded-[2px] border border-[#a9b7cb] text-[#6b7480]"
        >
          <Icon className="h-[6px] w-[6px]" strokeWidth={4} />
        </button>
      ))}
    </div>
    <div className="mt-[2px] mr-[3px] ml-[2px] flex min-h-0 flex-1 flex-col">
      <nav className="flex h-[10px] shrink-0 border-b border-[#3a3c3c] bg-linear-to-b from-[#5c5e5f] to-[#4b4d4e] pl-[3px] text-[7px] text-[#b5b8b8]">
        {VIEW_MENUS.map((label) => (
          <button
            key={label}
            className="flex w-[41px] items-center justify-between border-r border-[#3a3c3d] pr-[3px] whitespace-nowrap"
          >
            <span className="flex-1">{label}</span>
            <Caret />
          </button>
        ))}
      </nav>
      <div className="flex h-[24px] shrink-0 items-center border-b border-black bg-[#4b4c4d]">
        <div className="flex w-[301px] shrink-0 items-center gap-[4px] pr-[13px] pl-[4px] text-[#d4d6d6]">
          <button aria-label="Add track" className="flex h-[12px] w-[12px] items-center justify-center bg-[#2c2d2e]">
            <Plus className="h-[8px] w-[8px]" strokeWidth={4} />
          </button>
          <button aria-label="Duplicate track" className="flex h-[12px] w-[12px] items-center justify-center bg-[#2c2d2e]">
            <svg viewBox="0 0 18 18" className="h-[9px] w-[9px] fill-none stroke-current" strokeWidth="1.800">
              <path d="M1 13V1h12M5 5h12v12H5zM11 7v8M7 11h8" />
            </svg>
          </button>
          <Drop
            label="Track filter"
            value="All"
            className="ml-auto h-[14px] w-[61px] border border-[#8d9091] bg-[#2c2d2e] text-[7px] text-[#a3a6a6]"
          />
        </div>
        <TimeRuler />
        <button aria-label="Add ruler" className="flex w-[10px] items-center justify-center self-end pb-[6px] text-[#d4d6d6]">
          <Plus className="h-[8px] w-[8px]" strokeWidth={4} />
        </button>
      </div>
      <div className="flex min-h-0 flex-1">
        <div className="flex min-w-0 flex-1 flex-col bg-[#141516] pl-[2px]">
          <TrackRow track={{ id: 1, name: "YAM-Layla24 8/9a", write: false }} className="h-[13px] shrink-0" />
          <ActiveTrack />
          {TRACKS.map((track) => (
            <TrackRow key={track.id} track={track} className="flex-1" />
          ))}
        </div>
        <div className="flex w-[9px] flex-col items-center bg-[#48494a] pb-[1px] text-[#151617]">
          <Caret className="my-[3px] rotate-180" />
          <span className="h-[172px] w-[6px] bg-[#bababa]" />
          <Caret className="mt-auto mb-[4px]" />
          <ZoomOut className="h-[8px] w-[8px] text-[#d4d6d6]" strokeWidth={3} />
          <span className="my-[1px] h-[3px] w-[6px] bg-[#bababa]" />
          <ZoomIn className="h-[8px] w-[8px] text-[#d4d6d6]" strokeWidth={3} />
        </div>
      </div>
      <div className="flex h-[14px] shrink-0 items-center border-t border-black bg-[#484a4a] pr-[10px] pl-[279px]">
        <button aria-label="Lock" className="flex h-[11px] w-[10px] items-center justify-center bg-[#2a2b2c] text-[#c4c7c8]">
          <svg viewBox="0 0 8 9" className="h-[6px] w-[5px] fill-current">
            <path d="M0 4h8v5H0zM2 4V2q2-3 4 0v2H5V2.500H3V4z" />
          </svg>
        </button>
        <Caret className="ml-[15px] rotate-90 text-[#151617]" />
        <span className="ml-[4px] h-[9px] w-[8px] bg-[#bababa]" />
        <Caret className="ml-auto -rotate-90 text-[#151617]" />
        <ZoomOut className="ml-[7px] h-[9px] w-[8px] text-[#d4d6d6]" strokeWidth={3} />
        <span className="mx-[2px] mt-[3px] h-[4px] w-[3px] bg-[#bababa]" />
        <ZoomIn className="h-[9px] w-[8px] text-[#d4d6d6]" strokeWidth={3} />
      </div>
      <footer className="mt-[2px] flex h-[15px] shrink-0 items-center justify-between rounded-t-[2px] border-t border-[#5c5e5f] bg-[#4b4c4d] px-[5px] text-[7px] font-semibold text-[#c4c7c8]">
        MULTIDOCK
        <svg viewBox="0 0 8 10" className="h-[6px] w-[5px] fill-current">
          <path d="M4 0l3 4H1zM3 4h2v2H3zM0 8h8v2H0zM1 6h6v1H1z" />
        </svg>
      </footer>
    </div>
  </main>
);

/* ---------- dialog ---------- */

const DialogButton = ({ primary, className, children }: { primary?: boolean; className: string; children: string }) => (
  <button
    className={clsx(
      "rounded-[2px] border bg-[#fdfdfd] text-[6px] leading-none",
      primary ? "border-[#3d8fd6]" : "border-[#d5d5d5]",
      className
    )}
  >
    {children}
  </button>
);

const Cell = ({ label, state }: { label: string; state: string }) => (
  <td className={clsx("border-r border-b border-[#efefef] p-0", state === "-" && "bg-[#e6e6e6]")}>
    <span className="relative mx-auto block h-[6px] w-[6px]">
      <input
        type="checkbox"
        aria-label={label}
        defaultChecked={state === "x"}
        disabled={state === "-"}
        className="peer block h-[6px] w-[6px] appearance-none border border-[#c8c8c8] border-t-[#555] border-l-[#555] bg-white disabled:border-[#cacaca] disabled:bg-[#e6e6e6]"
      />
      <svg
        viewBox="0 0 8 8"
        className="pointer-events-none absolute inset-0 hidden h-[6px] w-[6px] fill-none stroke-[#111] peer-checked:block"
        strokeWidth="1.700"
      >
        <path d="M2 3.500l1.500 2L7 2" />
      </svg>
    </span>
  </td>
);

const TrackControlManager = () => (
  <div
    role="dialog"
    aria-label="Track Control Manager"
    className="absolute top-[253px] left-[519px] w-[298px] overflow-hidden rounded-[4px] bg-[#f0f0f0] pb-[4px] text-[6px] text-[#1f1f1f] shadow-[0_4px_12px_rgba(0,0,0,0.6)]"
  >
    <div className="flex h-[13px] items-center justify-between bg-[#eef3fa] px-[2px]">
      Track Control Manager
      <button aria-label="Close dialog" className="pr-[1px]">
        <X className="h-[9px] w-[9px]" />
      </button>
    </div>
    <div className="flex justify-between pt-[4px] pr-[6px] pl-[5px]">
      <div>
        <div className="flex h-[15px] items-center">
          <label htmlFor="preset" className="w-[37px] whitespace-nowrap">
            Preset Name:
          </label>
          <span className="relative mr-[6px] flex h-[11px] w-[67px] items-center border border-[#9a9a9a] bg-white">
            <select id="preset" className="h-full w-full appearance-none pl-[2px] outline-none">
              <option>Custom</option>
            </select>
            <svg viewBox="0 0 8 5" className="pointer-events-none absolute right-[2px] w-[5px] fill-none stroke-[#555]">
              <path d="M0 0l4 4 4-4" />
            </svg>
          </span>
          <DialogButton className="mr-[5px] h-[11px] w-[37px]">Delete</DialogButton>
          <DialogButton className="h-[11px] w-[37px]">New</DialogButton>
        </div>
        <p className="mt-[2px] leading-[8px]">
          Controls Visible in this preset...
          <br />
          Choose the controls you want to see for each strip type.
        </p>
      </div>
      <div className="flex w-[39px] flex-col gap-[2px]">
        <DialogButton primary className="h-[11px]">OK</DialogButton>
        <DialogButton className="h-[11px]">Cancel</DialogButton>
        <DialogButton className="mt-[1px] h-[11px]">Help</DialogButton>
      </div>
    </div>
    <div className="mx-[5px] mt-[3px] h-[195px] border border-[#8c9097] bg-white">
      <table className="w-full table-fixed border-collapse leading-[9px]">
        <colgroup>
          <col className="w-[51px]" />
          <col className="w-[41px]" />
          <col className="w-[41px]" />
          <col className="w-[50px]" />
          <col className="w-[41px]" />
          <col className="w-[59px]" />
          <col />
        </colgroup>
        <thead>
          <tr className="h-[12px] text-left whitespace-nowrap">
            <th className="p-0 pl-[3px] font-normal">Widget Section</th>
            {STRIPS.map((strip) => (
              <th key={strip} className="border-l border-[#efefef] p-0 pl-[2px] font-normal">
                {strip}
              </th>
            ))}
            <th className="border-l border-[#efefef] p-0" />
          </tr>
        </thead>
        <tbody>
          {WIDGETS.map(([name, states]) => (
            <tr key={name} className="h-[10px]">
              <td className="border-r border-b border-[#efefef] p-0 pl-[1px] whitespace-nowrap">{name}</td>
              {states.split("").map((state, i) => (
                <Cell key={i} label={`${name}, ${STRIPS[i]}`} state={state} />
              ))}
              <td className="border-b border-[#efefef] p-0" />
            </tr>
          ))}
          {[0, 1, 2].map((row) => (
            <tr key={row} className="h-[10px]">
              {[0, 1, 2, 3, 4, 5, 6].map((cell) => (
                <td key={cell} className="border-r border-b border-[#efefef] p-0" />
              ))}
            </tr>
          ))}
        </tbody>
      </table>
    </div>
    <div className="flex justify-end gap-[6px] pt-[4px] pr-[6px]">
      <DialogButton className="h-[10px] w-[80px]">Restore Preset Defaults</DialogButton>
      <DialogButton className="h-[10px] w-[80px]">Select All Controls</DialogButton>
    </div>
  </div>
);

const MENUS = ["File", "Edit", "Views", "Insert", "Process", "Project", "Utilities", "Window", "Help"];

export default function App() {
  return (
    <div className="relative flex h-screen min-h-[533px] flex-col overflow-hidden bg-[#474747] font-['Liberation_Sans',sans-serif] text-[6px]">
      <div className="flex h-[8px] shrink-0 items-start justify-between bg-[#f3f3f3] text-[#8c8c8c]">
        <span className="flex gap-[3px]">
          <span className="h-[6px] w-[5px] bg-[#222]" />
          <span className="leading-[5px]">PATCHEN SUNDOWN 17.cwp - SONAR Platinum</span>
        </span>
        <span className="flex gap-[16px] pr-[7px]">
          <Minus className="h-[5px] w-[7px]" />
          <Copy className="h-[5px] w-[7px] -scale-x-100" />
          <X className="h-[5px] w-[7px]" />
        </span>
      </div>
      <nav className="flex h-[10px] shrink-0 items-center gap-[8px] bg-[#efefef] text-[#9a9a9a]">
        {MENUS.map((menu) => (
          <button key={menu}>{menu}</button>
        ))}
        <svg viewBox="0 0 20 16" className="ml-auto h-[8px] w-[10px] fill-[#cfcfcf] stroke-[#555]" strokeWidth="2">
          <path d="M4 4h12v8H4zM0 0l4 4M20 0l-4 4M0 16l4-4M20 16l-4-4M1 5V1h4M15 1h4v4M1 11v4h4M15 15h4v-4" />
        </svg>
        <span className="mr-[5px] flex h-[9px] w-[71px] items-center bg-[#3d3e3f] pl-[3px] text-[#c4c7c8]">
          <Aperture className="h-[6px] w-[6px]" strokeWidth={4} />
          <Drop label="Lenses" value="Lenses" className="h-full flex-1" />
        </span>
      </nav>
      <Toolbar />
      <div className="flex min-h-0 flex-1">
        <Inspector />
        <TrackWindow />
      </div>
      {/* playhead */}
      <div className="absolute top-[98px] left-[522px] flex flex-col items-center">
        <span className="flex h-[8px] w-[12px] items-center justify-center rounded-b-[3px] bg-[#c3c6c8]">
          <span className="h-[4px] w-[4px] bg-[#222]" />
        </span>
        <span className="h-[150px] w-px bg-[#9a9c9d]" />
      </div>
      <TrackControlManager />
    </div>
  );
}
